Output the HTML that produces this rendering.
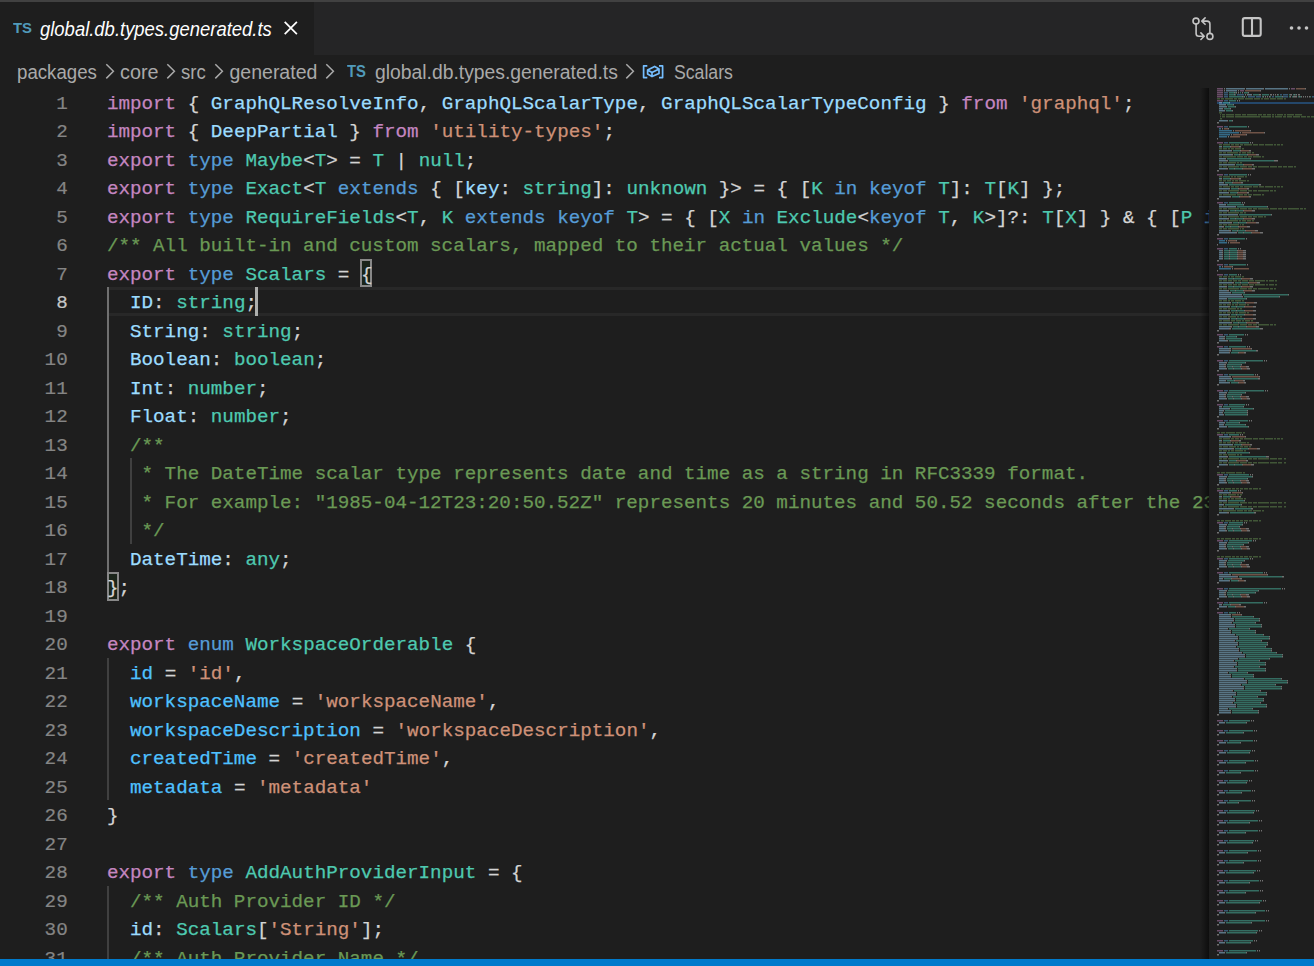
<!DOCTYPE html>
<html><head><meta charset="utf-8">
<style>
html,body{margin:0;padding:0;width:1314px;height:966px;overflow:hidden;background:#1e1e1e;position:relative}
*{box-sizing:border-box}
#top{position:absolute;left:0;top:0;width:1314px;height:2px;background:#414141}
#tabs{position:absolute;left:0;top:2px;width:1314px;height:52.5px;background:#252526}
#tab{position:absolute;left:0;top:0;width:314px;height:52.5px;background:#1e1e1e}
.ui{font-family:"Liberation Sans",sans-serif;position:absolute;white-space:pre}
#crumbs{position:absolute;left:0;top:54.5px;width:1314px;height:33px;background:#1e1e1e}
.cr{font-family:"Liberation Sans",sans-serif;position:absolute;white-space:pre;color:#a9a9a9;font-size:19.5px;line-height:22.4px;top:6.75px;transform-origin:left top}
.chev{position:absolute;top:0}
#ed{position:absolute;left:0;top:0;width:1209px;height:959px;overflow:hidden}
.ln{position:absolute;left:0;height:28.5px;width:1209px}
.ln span{position:absolute;top:2px;-webkit-text-stroke:0.25px currentColor;font-family:"Liberation Mono",monospace;font-size:19.24px;line-height:28.5px;white-space:pre}
.num{position:absolute;left:0;padding-top:2px;width:67.7px;text-align:right;font-family:"Liberation Mono",monospace;font-size:19.24px;line-height:28.5px;height:28.5px;color:#858585;white-space:pre;-webkit-text-stroke:0.2px currentColor}
.num.act{color:#c6c6c6}
.guide{position:absolute;width:1.9px;background:#404040}
.guide.act{background:#707070}
#curline{position:absolute;left:107.5px;top:287.0px;width:1101.5px;height:28.5px;border-top:3px solid #282828;border-bottom:3px solid #282828}
#cursor{position:absolute;left:255.00px;top:287.0px;width:3px;height:28.5px;background:#aeafad}
.bb{position:absolute;border:2px solid #888888;background:rgba(0,100,0,0.1)}
#mm{position:absolute;left:1209px;top:87.5px;width:105px;height:871.5px;background:#1e1e1e}
#mmshadow{position:absolute;left:1200px;top:87.5px;width:9px;height:871.5px;background:linear-gradient(to right,rgba(0,0,0,0),rgba(0,0,0,0.55))}
#status{position:absolute;left:0;top:959px;width:1314px;height:7px;background:#007acc}
</style></head><body>
<div id="top"></div>
<div id="tabs">
  <div id="tab">
    <div class="ui" style="left:12.8px;top:17.2px;font-size:15.2px;line-height:17px;font-weight:bold;color:#519aba;transform:scaleX(0.98);transform-origin:left top">TS</div>
    <div class="ui" style="left:40.2px;top:16.25px;font-size:19.5px;line-height:22.4px;font-style:italic;color:#ffffff;transform:scaleX(0.946);transform-origin:left top">global.db.types.generated.ts</div>
    <svg style="position:absolute;left:282px;top:17px" width="18" height="18" viewBox="0 0 18 18"><path d="M2.7 2.8L14.9 15.1M14.9 2.8L2.7 15.1" stroke="#ffffff" stroke-width="1.7" fill="none"/></svg>
  </div>
  <svg style="position:absolute;left:1188px;top:12px" width="30" height="30" viewBox="0 0 30 30" fill="none" stroke="#c5c5c5" stroke-width="1.6" stroke-linecap="round" stroke-linejoin="round"><circle cx="8" cy="7.1" r="3"/><path d="M8.1 10.3V19.5Q8.1 22.2 10.8 22.2H16.1M12.9 18.9L16.2 22.2L12.9 25.5"/><circle cx="21.9" cy="22.4" r="3"/><path d="M21.9 19.3V10Q21.9 7.1 19 7.1H14M17.1 3.9L13.8 7.1L17.1 10.3"/></svg>
  <svg style="position:absolute;left:1236px;top:10px" width="30" height="30" viewBox="0 0 30 30" fill="none" stroke="#c5c5c5" stroke-width="2.1"><rect x="6.8" y="6.1" width="17.9" height="17.8" rx="2"/><path d="M16 6.1V23.9"/></svg>
  <svg style="position:absolute;left:1284px;top:10px" width="30" height="30" viewBox="0 0 30 30" fill="#c5c5c5"><circle cx="7.5" cy="16" r="1.8"/><circle cx="15" cy="16" r="1.8"/><circle cx="22.5" cy="16" r="1.8"/></svg>
</div>
<div id="crumbs">

  <div class="cr" style="left:16.8px;transform:scaleX(0.957)">packages</div>
  <svg class="chev" style="left:104px" width="12" height="33" viewBox="0 0 12 33"><path d="M2.3 9.2L9.4 16.3L2.3 23.4" stroke="#a9a9a9" stroke-width="1.5" fill="none"/></svg>
  <div class="cr" style="left:119.7px;transform:scaleX(1.016)">core</div>
  <svg class="chev" style="left:164.8px" width="12" height="33" viewBox="0 0 12 33"><path d="M2.3 9.2L9.4 16.3L2.3 23.4" stroke="#a9a9a9" stroke-width="1.5" fill="none"/></svg>
  <div class="cr" style="left:181px;transform:scaleX(0.95)">src</div>
  <svg class="chev" style="left:213.3px" width="12" height="33" viewBox="0 0 12 33"><path d="M2.3 9.2L9.4 16.3L2.3 23.4" stroke="#a9a9a9" stroke-width="1.5" fill="none"/></svg>
  <div class="cr" style="left:229.5px;transform:scaleX(1.0)">generated</div>
  <svg class="chev" style="left:324.2px" width="12" height="33" viewBox="0 0 12 33"><path d="M2.3 9.2L9.4 16.3L2.3 23.4" stroke="#a9a9a9" stroke-width="1.5" fill="none"/></svg>
  <div class="ui" style="left:346.8px;top:7.4px;font-size:16.5px;line-height:18px;font-weight:bold;color:#519aba;transform:scaleX(0.9);transform-origin:left top">TS</div>
  <div class="cr" style="left:375px;transform:scaleX(0.991)">global.db.types.generated.ts</div>
  <svg class="chev" style="left:624.2px" width="12" height="33" viewBox="0 0 12 33"><path d="M2.3 9.2L9.4 16.3L2.3 23.4" stroke="#a9a9a9" stroke-width="1.5" fill="none"/></svg>
  <svg style="position:absolute;left:638px;top:5.5px" width="30" height="24" viewBox="0 0 30 24" fill="none" stroke="#75beff" stroke-width="1.7" stroke-linejoin="round"><path d="M9.3 5.8H5.6V17.6H9.3M21 5.8H24.6V17.6H21"/><path d="M16.7 6.4L21 8.9V13.4L14 16.6L9.6 14.1V10.1Z M9.6 10.1L14 12.6L21 8.9M14 12.6V16.6"/></svg>
  <div class="cr" style="left:674px;transform:scaleX(0.906)">Scalars</div>
</div>
<div id="ed">
<div id="curline"></div>
<div class="guide act" style="left:106.90px;top:287.00px;height:285.00px"></div><div class="guide" style="left:129.99px;top:458.00px;height:85.50px"></div><div class="guide" style="left:106.90px;top:657.50px;height:142.50px"></div><div class="guide" style="left:106.90px;top:885.50px;height:85.50px"></div>
<div class="bb" style="left:359.8px;top:258.5px;width:12.4px;height:28.5px"></div><div class="bb" style="left:106.9px;top:572px;width:12px;height:28.5px"></div>
<div class="ln" style="top:87.50px"><span style="left:106.900px;color:#c586c0">import</span><span style="left:187.722px;color:#d4d4d4">{</span><span style="left:210.814px;color:#9cdcfe">GraphQLResolveInfo</span><span style="left:418.642px;color:#d4d4d4">,</span><span style="left:441.734px;color:#9cdcfe">GraphQLScalarType</span><span style="left:638.016px;color:#d4d4d4">,</span><span style="left:661.108px;color:#9cdcfe">GraphQLScalarTypeConfig</span><span style="left:938.212px;color:#d4d4d4">}</span><span style="left:961.304px;color:#c586c0">from</span><span style="left:1019.034px;color:#ce9178">&#x27;graphql&#x27;</span><span style="left:1122.948px;color:#d4d4d4">;</span></div>
<div class="num" style="top:87.50px">1</div>
<div class="ln" style="top:116.00px"><span style="left:106.900px;color:#c586c0">import</span><span style="left:187.722px;color:#d4d4d4">{</span><span style="left:210.814px;color:#9cdcfe">DeepPartial</span><span style="left:349.366px;color:#d4d4d4">}</span><span style="left:372.458px;color:#c586c0">from</span><span style="left:430.188px;color:#ce9178">&#x27;utility-types&#x27;</span><span style="left:603.378px;color:#d4d4d4">;</span></div>
<div class="num" style="top:116.00px">2</div>
<div class="ln" style="top:144.50px"><span style="left:106.900px;color:#c586c0">export</span><span style="left:187.722px;color:#569cd6">type</span><span style="left:245.452px;color:#4ec9b0">Maybe</span><span style="left:303.182px;color:#d4d4d4">&lt;</span><span style="left:314.728px;color:#4ec9b0">T</span><span style="left:326.274px;color:#d4d4d4">&gt;</span><span style="left:349.366px;color:#d4d4d4">=</span><span style="left:372.458px;color:#4ec9b0">T</span><span style="left:395.550px;color:#d4d4d4">|</span><span style="left:418.642px;color:#4ec9b0">null</span><span style="left:464.826px;color:#d4d4d4">;</span></div>
<div class="num" style="top:144.50px">3</div>
<div class="ln" style="top:173.00px"><span style="left:106.900px;color:#c586c0">export</span><span style="left:187.722px;color:#569cd6">type</span><span style="left:245.452px;color:#4ec9b0">Exact</span><span style="left:303.182px;color:#d4d4d4">&lt;</span><span style="left:314.728px;color:#4ec9b0">T</span><span style="left:337.820px;color:#569cd6">extends</span><span style="left:430.188px;color:#d4d4d4">{</span><span style="left:453.280px;color:#d4d4d4">[</span><span style="left:464.826px;color:#9cdcfe">key</span><span style="left:499.464px;color:#d4d4d4">:</span><span style="left:522.556px;color:#4ec9b0">string</span><span style="left:591.832px;color:#d4d4d4">]:</span><span style="left:626.470px;color:#4ec9b0">unknown</span><span style="left:718.838px;color:#d4d4d4">}&gt;</span><span style="left:753.476px;color:#d4d4d4">=</span><span style="left:776.568px;color:#d4d4d4">{</span><span style="left:799.660px;color:#d4d4d4">[</span><span style="left:811.206px;color:#4ec9b0">K</span><span style="left:834.298px;color:#569cd6">in</span><span style="left:868.936px;color:#569cd6">keyof</span><span style="left:938.212px;color:#4ec9b0">T</span><span style="left:949.758px;color:#d4d4d4">]:</span><span style="left:984.396px;color:#4ec9b0">T</span><span style="left:995.942px;color:#d4d4d4">[</span><span style="left:1007.488px;color:#4ec9b0">K</span><span style="left:1019.034px;color:#d4d4d4">]</span><span style="left:1042.126px;color:#d4d4d4">};</span></div>
<div class="num" style="top:173.00px">4</div>
<div class="ln" style="top:201.50px"><span style="left:106.900px;color:#c586c0">export</span><span style="left:187.722px;color:#569cd6">type</span><span style="left:245.452px;color:#4ec9b0">RequireFields</span><span style="left:395.550px;color:#d4d4d4">&lt;</span><span style="left:407.096px;color:#4ec9b0">T</span><span style="left:418.642px;color:#d4d4d4">,</span><span style="left:441.734px;color:#4ec9b0">K</span><span style="left:464.826px;color:#569cd6">extends</span><span style="left:557.194px;color:#569cd6">keyof</span><span style="left:626.470px;color:#4ec9b0">T</span><span style="left:638.016px;color:#d4d4d4">&gt;</span><span style="left:661.108px;color:#d4d4d4">=</span><span style="left:684.200px;color:#d4d4d4">{</span><span style="left:707.292px;color:#d4d4d4">[</span><span style="left:718.838px;color:#4ec9b0">X</span><span style="left:741.930px;color:#569cd6">in</span><span style="left:776.568px;color:#4ec9b0">Exclude</span><span style="left:857.390px;color:#d4d4d4">&lt;</span><span style="left:868.936px;color:#569cd6">keyof</span><span style="left:938.212px;color:#4ec9b0">T</span><span style="left:949.758px;color:#d4d4d4">,</span><span style="left:972.850px;color:#4ec9b0">K</span><span style="left:984.396px;color:#d4d4d4">&gt;]?:</span><span style="left:1042.126px;color:#4ec9b0">T</span><span style="left:1053.672px;color:#d4d4d4">[</span><span style="left:1065.218px;color:#4ec9b0">X</span><span style="left:1076.764px;color:#d4d4d4">]</span><span style="left:1099.856px;color:#d4d4d4">}</span><span style="left:1122.948px;color:#d4d4d4">&amp;</span><span style="left:1146.040px;color:#d4d4d4">{</span><span style="left:1169.132px;color:#d4d4d4">[</span><span style="left:1180.678px;color:#4ec9b0">P</span><span style="left:1203.770px;color:#569cd6">in</span><span style="left:1238.408px;color:#4ec9b0">K</span><span style="left:1249.954px;color:#d4d4d4">]-?:</span><span style="left:1307.684px;color:#4ec9b0">NonNullable</span><span style="left:1434.690px;color:#d4d4d4">&lt;</span><span style="left:1446.236px;color:#4ec9b0">T</span><span style="left:1457.782px;color:#d4d4d4">[</span><span style="left:1469.328px;color:#4ec9b0">P</span><span style="left:1480.874px;color:#d4d4d4">]&gt;</span><span style="left:1515.512px;color:#d4d4d4">};</span></div>
<div class="num" style="top:201.50px">5</div>
<div class="ln" style="top:230.00px"><span style="left:106.900px;color:#6a9955">/** All built-in and custom scalars, mapped to their actual values */</span></div>
<div class="num" style="top:230.00px">6</div>
<div class="ln" style="top:258.50px"><span style="left:106.900px;color:#c586c0">export</span><span style="left:187.722px;color:#569cd6">type</span><span style="left:245.452px;color:#4ec9b0">Scalars</span><span style="left:337.820px;color:#d4d4d4">=</span><span style="left:360.912px;color:#d4d4d4">{</span></div>
<div class="num" style="top:258.50px">7</div>
<div class="ln" style="top:287.00px"><span style="left:129.992px;color:#9cdcfe">ID</span><span style="left:153.084px;color:#d4d4d4">:</span><span style="left:176.176px;color:#4ec9b0">string</span><span style="left:245.452px;color:#d4d4d4">;</span></div>
<div class="num act" style="top:287.00px">8</div>
<div class="ln" style="top:315.50px"><span style="left:129.992px;color:#9cdcfe">String</span><span style="left:199.268px;color:#d4d4d4">:</span><span style="left:222.360px;color:#4ec9b0">string</span><span style="left:291.636px;color:#d4d4d4">;</span></div>
<div class="num" style="top:315.50px">9</div>
<div class="ln" style="top:344.00px"><span style="left:129.992px;color:#9cdcfe">Boolean</span><span style="left:210.814px;color:#d4d4d4">:</span><span style="left:233.906px;color:#4ec9b0">boolean</span><span style="left:314.728px;color:#d4d4d4">;</span></div>
<div class="num" style="top:344.00px">10</div>
<div class="ln" style="top:372.50px"><span style="left:129.992px;color:#9cdcfe">Int</span><span style="left:164.630px;color:#d4d4d4">:</span><span style="left:187.722px;color:#4ec9b0">number</span><span style="left:256.998px;color:#d4d4d4">;</span></div>
<div class="num" style="top:372.50px">11</div>
<div class="ln" style="top:401.00px"><span style="left:129.992px;color:#9cdcfe">Float</span><span style="left:187.722px;color:#d4d4d4">:</span><span style="left:210.814px;color:#4ec9b0">number</span><span style="left:280.090px;color:#d4d4d4">;</span></div>
<div class="num" style="top:401.00px">12</div>
<div class="ln" style="top:429.50px"><span style="left:129.992px;color:#6a9955">/**</span></div>
<div class="num" style="top:429.50px">13</div>
<div class="ln" style="top:458.00px"><span style="left:106.900px;color:#6a9955">   * The DateTime scalar type represents date and time as a string in RFC3339 format.</span></div>
<div class="num" style="top:458.00px">14</div>
<div class="ln" style="top:486.50px"><span style="left:106.900px;color:#6a9955">   * For example: &quot;1985-04-12T23:20:50.52Z&quot; represents 20 minutes and 50.52 seconds after the 23rd hour of April 12th, 1985 in UTC.</span></div>
<div class="num" style="top:486.50px">15</div>
<div class="ln" style="top:515.00px"><span style="left:106.900px;color:#6a9955">   */</span></div>
<div class="num" style="top:515.00px">16</div>
<div class="ln" style="top:543.50px"><span style="left:129.992px;color:#9cdcfe">DateTime</span><span style="left:222.360px;color:#d4d4d4">:</span><span style="left:245.452px;color:#4ec9b0">any</span><span style="left:280.090px;color:#d4d4d4">;</span></div>
<div class="num" style="top:543.50px">17</div>
<div class="ln" style="top:572.00px"><span style="left:106.900px;color:#d4d4d4">};</span></div>
<div class="num" style="top:572.00px">18</div>
<div class="ln" style="top:600.50px"></div>
<div class="num" style="top:600.50px">19</div>
<div class="ln" style="top:629.00px"><span style="left:106.900px;color:#c586c0">export</span><span style="left:187.722px;color:#569cd6">enum</span><span style="left:245.452px;color:#4ec9b0">WorkspaceOrderable</span><span style="left:464.826px;color:#d4d4d4">{</span></div>
<div class="num" style="top:629.00px">20</div>
<div class="ln" style="top:657.50px"><span style="left:129.992px;color:#4fc1ff">id</span><span style="left:164.630px;color:#d4d4d4">=</span><span style="left:187.722px;color:#ce9178">&#x27;id&#x27;</span><span style="left:233.906px;color:#d4d4d4">,</span></div>
<div class="num" style="top:657.50px">21</div>
<div class="ln" style="top:686.00px"><span style="left:129.992px;color:#4fc1ff">workspaceName</span><span style="left:291.636px;color:#d4d4d4">=</span><span style="left:314.728px;color:#ce9178">&#x27;workspaceName&#x27;</span><span style="left:487.918px;color:#d4d4d4">,</span></div>
<div class="num" style="top:686.00px">22</div>
<div class="ln" style="top:714.50px"><span style="left:129.992px;color:#4fc1ff">workspaceDescription</span><span style="left:372.458px;color:#d4d4d4">=</span><span style="left:395.550px;color:#ce9178">&#x27;workspaceDescription&#x27;</span><span style="left:649.562px;color:#d4d4d4">,</span></div>
<div class="num" style="top:714.50px">23</div>
<div class="ln" style="top:743.00px"><span style="left:129.992px;color:#4fc1ff">createdTime</span><span style="left:268.544px;color:#d4d4d4">=</span><span style="left:291.636px;color:#ce9178">&#x27;createdTime&#x27;</span><span style="left:441.734px;color:#d4d4d4">,</span></div>
<div class="num" style="top:743.00px">24</div>
<div class="ln" style="top:771.50px"><span style="left:129.992px;color:#4fc1ff">metadata</span><span style="left:233.906px;color:#d4d4d4">=</span><span style="left:256.998px;color:#ce9178">&#x27;metadata&#x27;</span></div>
<div class="num" style="top:771.50px">25</div>
<div class="ln" style="top:800.00px"><span style="left:106.900px;color:#d4d4d4">}</span></div>
<div class="num" style="top:800.00px">26</div>
<div class="ln" style="top:828.50px"></div>
<div class="num" style="top:828.50px">27</div>
<div class="ln" style="top:857.00px"><span style="left:106.900px;color:#c586c0">export</span><span style="left:187.722px;color:#569cd6">type</span><span style="left:245.452px;color:#4ec9b0">AddAuthProviderInput</span><span style="left:487.918px;color:#d4d4d4">=</span><span style="left:511.010px;color:#d4d4d4">{</span></div>
<div class="num" style="top:857.00px">28</div>
<div class="ln" style="top:885.50px"><span style="left:129.992px;color:#6a9955">/** Auth Provider ID */</span></div>
<div class="num" style="top:885.50px">29</div>
<div class="ln" style="top:914.00px"><span style="left:129.992px;color:#9cdcfe">id</span><span style="left:153.084px;color:#d4d4d4">:</span><span style="left:176.176px;color:#4ec9b0">Scalars</span><span style="left:256.998px;color:#d4d4d4">[</span><span style="left:268.544px;color:#ce9178">&#x27;String&#x27;</span><span style="left:360.912px;color:#d4d4d4">];</span></div>
<div class="num" style="top:914.00px">30</div>
<div class="ln" style="top:942.50px"><span style="left:129.992px;color:#6a9955">/** Auth Provider Name */</span></div>
<div class="num" style="top:942.50px">31</div>
<div id="cursor"></div>
</div>
<div id="mmshadow"></div>
<div id="mm"><div style="position:absolute;left:8px;top:14px;width:97px;height:2px;background:#264f78;opacity:0.85"></div><svg width="105" height="871" style="position:absolute;left:0;top:0.5px" opacity="0.46"><path fill="#c586c0" d="M8 0h6v1.6h-6zM82 0h4v1.6h-4zM8 2h6v1.6h-6zM31 2h4v1.6h-4zM8 4h6v1.6h-6zM8 6h6v1.6h-6zM8 8h6v1.6h-6zM8 12h6v1.6h-6zM8 38h6v1.6h-6zM8 54h6v1.6h-6zM8 86h6v1.6h-6zM8 114h6v1.6h-6zM8 150h6v1.6h-6zM8 160h6v1.6h-6zM8 176h6v1.6h-6zM8 186h6v1.6h-6zM8 246h6v1.6h-6zM8 258h6v1.6h-6zM8 272h6v1.6h-6zM8 286h6v1.6h-6zM8 302h6v1.6h-6zM8 316h6v1.6h-6zM8 332h6v1.6h-6zM8 346h6v1.6h-6zM8 386h6v1.6h-6zM8 402h6v1.6h-6zM8 434h6v1.6h-6zM8 452h6v1.6h-6zM8 470h6v1.6h-6zM8 484h6v1.6h-6zM8 500h6v1.6h-6zM8 514h6v1.6h-6zM8 524h6v1.6h-6zM8 632h6v1.6h-6zM8 642h6v1.6h-6zM8 652h6v1.6h-6zM8 662h6v1.6h-6zM8 672h6v1.6h-6zM8 682h6v1.6h-6zM8 692h6v1.6h-6zM8 702h6v1.6h-6zM8 712h6v1.6h-6zM8 722h6v1.6h-6zM8 732h6v1.6h-6zM8 742h6v1.6h-6zM8 752h6v1.6h-6zM8 762h6v1.6h-6zM8 772h6v1.6h-6zM8 782h6v1.6h-6zM8 792h6v1.6h-6zM8 802h6v1.6h-6zM8 812h6v1.6h-6zM8 822h6v1.6h-6zM8 832h6v1.6h-6zM8 842h6v1.6h-6zM8 852h6v1.6h-6zM8 862h6v1.6h-6z"/><path fill="#d4d4d4" d="M15 0h1v1.6h-1zM35 0h1v1.6h-1zM54 0h1v1.6h-1zM80 0h1v1.6h-1zM96 0h1v1.6h-1zM15 2h1v1.6h-1zM29 2h1v1.6h-1zM51 2h1v1.6h-1zM25 4h1v1.6h-1zM27 4h1v1.6h-1zM29 4h1v1.6h-1zM33 4h1v1.6h-1zM39 4h1v1.6h-1zM25 6h1v1.6h-1zM36 6h1v1.6h-1zM38 6h1v1.6h-1zM42 6h1v1.6h-1zM50 6h2v1.6h-2zM61 6h2v1.6h-2zM64 6h1v1.6h-1zM66 6h1v1.6h-1zM68 6h1v1.6h-1zM81 6h2v1.6h-2zM85 6h1v1.6h-1zM87 6h1v1.6h-1zM89 6h2v1.6h-2zM33 8h1v1.6h-1zM35 8h1v1.6h-1zM54 8h1v1.6h-1zM56 8h1v1.6h-1zM58 8h1v1.6h-1zM60 8h1v1.6h-1zM73 8h1v1.6h-1zM81 8h1v1.6h-1zM84 8h4v1.6h-4zM90 8h1v1.6h-1zM92 8h1v1.6h-1zM94 8h1v1.6h-1zM96 8h1v1.6h-1zM98 8h1v1.6h-1zM100 8h1v1.6h-1zM107 8h4v1.6h-4zM123 8h1v1.6h-1zM125 8h1v1.6h-1zM127 8h2v1.6h-2zM130 8h2v1.6h-2zM28 12h1v1.6h-1zM30 12h1v1.6h-1zM12 14h1v1.6h-1zM20 14h1v1.6h-1zM16 16h1v1.6h-1zM24 16h1v1.6h-1zM17 18h1v1.6h-1zM26 18h1v1.6h-1zM13 20h1v1.6h-1zM21 20h1v1.6h-1zM15 22h1v1.6h-1zM23 22h1v1.6h-1zM18 32h1v1.6h-1zM23 32h1v1.6h-1zM8 34h2v1.6h-2zM39 38h1v1.6h-1zM13 40h1v1.6h-1zM19 40h1v1.6h-1zM24 42h1v1.6h-1zM41 42h1v1.6h-1zM31 44h1v1.6h-1zM55 44h1v1.6h-1zM22 46h1v1.6h-1zM37 46h1v1.6h-1zM19 48h1v1.6h-1zM8 50h1v1.6h-1zM41 54h1v1.6h-1zM43 54h1v1.6h-1zM12 58h1v1.6h-1zM21 58h1v1.6h-1zM30 58h2v1.6h-2zM22 62h1v1.6h-1zM31 62h1v1.6h-1zM40 62h2v1.6h-2zM22 66h2v1.6h-2zM30 66h1v1.6h-1zM38 66h1v1.6h-1zM47 66h3v1.6h-3zM16 70h1v1.6h-1zM41 70h1v1.6h-1zM17 72h2v1.6h-2zM65 72h4v1.6h-4zM25 76h1v1.6h-1zM34 76h1v1.6h-1zM43 76h2v1.6h-2zM17 80h2v1.6h-2zM25 80h1v1.6h-1zM33 80h1v1.6h-1zM43 80h3v1.6h-3zM8 82h2v1.6h-2zM39 86h1v1.6h-1zM41 86h1v1.6h-1zM12 90h1v1.6h-1zM21 90h1v1.6h-1zM30 90h2v1.6h-2zM14 94h1v1.6h-1zM23 94h1v1.6h-1zM32 94h2v1.6h-2zM17 96h2v1.6h-2zM50 96h2v1.6h-2zM20 100h1v1.6h-1zM29 100h1v1.6h-1zM38 100h2v1.6h-2zM19 104h1v1.6h-1zM28 104h1v1.6h-1zM38 104h2v1.6h-2zM21 108h1v1.6h-1zM30 108h1v1.6h-1zM40 108h2v1.6h-2zM8 110h2v1.6h-2zM33 114h1v1.6h-1zM35 114h1v1.6h-1zM16 116h1v1.6h-1zM34 116h1v1.6h-1zM26 118h1v1.6h-1zM58 118h1v1.6h-1zM18 122h2v1.6h-2zM26 122h1v1.6h-1zM34 122h1v1.6h-1zM43 122h3v1.6h-3zM28 126h1v1.6h-1zM62 126h1v1.6h-1zM18 130h2v1.6h-2zM26 130h1v1.6h-1zM34 130h1v1.6h-1zM43 130h3v1.6h-3zM21 134h2v1.6h-2zM29 134h1v1.6h-1zM37 134h1v1.6h-1zM47 134h3v1.6h-3zM13 138h2v1.6h-2zM21 138h1v1.6h-1zM29 138h1v1.6h-1zM38 138h3v1.6h-3zM20 142h2v1.6h-2zM28 142h1v1.6h-1zM36 142h1v1.6h-1zM46 142h3v1.6h-3zM26 144h2v1.6h-2zM34 144h1v1.6h-1zM42 144h1v1.6h-1zM51 144h3v1.6h-3zM8 146h2v1.6h-2zM37 150h1v1.6h-1zM17 152h1v1.6h-1zM27 152h1v1.6h-1zM19 154h1v1.6h-1zM8 156h1v1.6h-1zM29 160h1v1.6h-1zM31 160h1v1.6h-1zM13 162h1v1.6h-1zM20 162h1v1.6h-1zM28 162h1v1.6h-1zM34 162h3v1.6h-3zM13 164h1v1.6h-1zM20 164h1v1.6h-1zM28 164h1v1.6h-1zM34 164h3v1.6h-3zM13 166h1v1.6h-1zM20 166h1v1.6h-1zM28 166h1v1.6h-1zM34 166h3v1.6h-3zM13 168h1v1.6h-1zM20 168h1v1.6h-1zM28 168h1v1.6h-1zM34 168h3v1.6h-3zM13 170h1v1.6h-1zM20 170h1v1.6h-1zM28 170h1v1.6h-1zM34 170h3v1.6h-3zM8 172h2v1.6h-2zM38 176h1v1.6h-1zM13 178h1v1.6h-1zM23 178h1v1.6h-1zM23 180h1v1.6h-1zM8 182h1v1.6h-1zM29 186h1v1.6h-1zM31 186h1v1.6h-1zM16 190h2v1.6h-2zM24 190h1v1.6h-1zM32 190h1v1.6h-1zM41 190h3v1.6h-3zM23 194h2v1.6h-2zM31 194h1v1.6h-1zM39 194h1v1.6h-1zM48 194h3v1.6h-3zM16 198h2v1.6h-2zM24 198h1v1.6h-1zM32 198h1v1.6h-1zM41 198h3v1.6h-3zM18 202h2v1.6h-2zM26 202h1v1.6h-1zM34 202h1v1.6h-1zM43 202h3v1.6h-3zM21 204h1v1.6h-1zM35 204h1v1.6h-1zM32 206h1v1.6h-1zM79 206h1v1.6h-1zM33 208h1v1.6h-1zM70 208h1v1.6h-1zM17 210h1v1.6h-1zM37 210h1v1.6h-1zM20 214h2v1.6h-2zM28 214h1v1.6h-1zM36 214h1v1.6h-1zM45 214h3v1.6h-3zM19 218h2v1.6h-2zM27 218h1v1.6h-1zM35 218h1v1.6h-1zM44 218h3v1.6h-3zM19 222h2v1.6h-2zM27 222h1v1.6h-1zM35 222h1v1.6h-1zM44 222h3v1.6h-3zM19 226h2v1.6h-2zM27 226h1v1.6h-1zM35 226h1v1.6h-1zM44 226h3v1.6h-3zM19 230h2v1.6h-2zM27 230h1v1.6h-1zM35 230h1v1.6h-1zM44 230h3v1.6h-3zM21 234h2v1.6h-2zM29 234h1v1.6h-1zM37 234h1v1.6h-1zM47 234h3v1.6h-3zM21 238h2v1.6h-2zM29 238h1v1.6h-1zM37 238h1v1.6h-1zM47 238h3v1.6h-3zM20 240h2v1.6h-2zM51 240h3v1.6h-3zM8 242h2v1.6h-2zM36 246h1v1.6h-1zM38 246h1v1.6h-1zM15 248h1v1.6h-1zM27 248h1v1.6h-1zM14 250h2v1.6h-2zM32 250h1v1.6h-1zM17 252h2v1.6h-2zM32 252h1v1.6h-1zM8 254h2v1.6h-2zM38 258h1v1.6h-1zM40 258h1v1.6h-1zM20 260h2v1.6h-2zM42 260h1v1.6h-1zM20 262h2v1.6h-2zM47 262h2v1.6h-2zM20 264h1v1.6h-1zM29 264h1v1.6h-1zM35 264h2v1.6h-2zM8 266h2v1.6h-2zM55 272h1v1.6h-1zM57 272h1v1.6h-1zM16 274h2v1.6h-2zM36 274h1v1.6h-1zM15 276h2v1.6h-2zM32 276h1v1.6h-1zM15 278h2v1.6h-2zM23 278h1v1.6h-1zM31 278h1v1.6h-1zM37 278h3v1.6h-3zM16 280h2v1.6h-2zM24 280h1v1.6h-1zM32 280h1v1.6h-1zM38 280h3v1.6h-3zM8 282h2v1.6h-2zM46 286h1v1.6h-1zM48 286h1v1.6h-1zM20 288h2v1.6h-2zM50 288h1v1.6h-1zM21 290h2v1.6h-2zM49 290h2v1.6h-2zM16 292h1v1.6h-1zM25 292h1v1.6h-1zM34 292h2v1.6h-2zM20 294h1v1.6h-1zM29 294h1v1.6h-1zM35 294h2v1.6h-2zM8 296h2v1.6h-2zM56 302h1v1.6h-1zM58 302h1v1.6h-1zM16 304h2v1.6h-2zM36 304h1v1.6h-1zM15 306h2v1.6h-2zM32 306h1v1.6h-1zM15 308h2v1.6h-2zM23 308h1v1.6h-1zM31 308h1v1.6h-1zM37 308h3v1.6h-3zM16 310h2v1.6h-2zM24 310h1v1.6h-1zM32 310h1v1.6h-1zM38 310h3v1.6h-3zM8 312h2v1.6h-2zM37 316h1v1.6h-1zM39 316h1v1.6h-1zM12 318h1v1.6h-1zM34 318h1v1.6h-1zM20 320h1v1.6h-1zM44 320h1v1.6h-1zM14 322h1v1.6h-1zM38 322h1v1.6h-1zM13 324h1v1.6h-1zM38 324h1v1.6h-1zM14 326h1v1.6h-1zM38 326h1v1.6h-1zM8 328h2v1.6h-2zM40 332h1v1.6h-1zM42 332h1v1.6h-1zM15 334h1v1.6h-1zM30 334h1v1.6h-1zM14 336h1v1.6h-1zM36 336h1v1.6h-1zM17 338h1v1.6h-1zM39 338h1v1.6h-1zM8 340h2v1.6h-2zM31 346h1v1.6h-1zM33 346h1v1.6h-1zM20 348h2v1.6h-2zM36 348h1v1.6h-1zM12 352h1v1.6h-1zM21 352h1v1.6h-1zM30 352h2v1.6h-2zM23 356h1v1.6h-1zM32 356h1v1.6h-1zM41 356h2v1.6h-2zM23 360h2v1.6h-2zM31 360h1v1.6h-1zM39 360h1v1.6h-1zM48 360h3v1.6h-3zM16 364h1v1.6h-1zM40 364h1v1.6h-1zM17 368h2v1.6h-2zM57 368h3v1.6h-3zM18 372h1v1.6h-1zM27 372h1v1.6h-1zM37 372h2v1.6h-2zM17 376h2v1.6h-2zM25 376h1v1.6h-1zM33 376h1v1.6h-1zM42 376h3v1.6h-3zM8 378h2v1.6h-2zM41 386h1v1.6h-1zM43 386h1v1.6h-1zM16 388h2v1.6h-2zM43 388h1v1.6h-1zM15 390h2v1.6h-2zM38 390h1v1.6h-1zM15 392h2v1.6h-2zM23 392h1v1.6h-1zM31 392h1v1.6h-1zM37 392h3v1.6h-3zM16 394h2v1.6h-2zM24 394h1v1.6h-1zM32 394h1v1.6h-1zM38 394h3v1.6h-3zM8 396h2v1.6h-2zM29 402h1v1.6h-1zM31 402h1v1.6h-1zM20 404h2v1.6h-2zM33 404h1v1.6h-1zM12 408h1v1.6h-1zM21 408h1v1.6h-1zM30 408h2v1.6h-2zM17 412h1v1.6h-1zM35 412h1v1.6h-1zM14 416h1v1.6h-1zM32 416h1v1.6h-1zM24 420h1v1.6h-1zM42 420h2v1.6h-2zM18 424h2v1.6h-2zM45 424h2v1.6h-2zM8 426h2v1.6h-2zM35 434h1v1.6h-1zM37 434h1v1.6h-1zM16 436h2v1.6h-2zM33 436h1v1.6h-1zM15 438h2v1.6h-2zM30 438h1v1.6h-1zM15 440h2v1.6h-2zM23 440h1v1.6h-1zM31 440h1v1.6h-1zM37 440h3v1.6h-3zM16 442h2v1.6h-2zM24 442h1v1.6h-1zM32 442h1v1.6h-1zM38 442h3v1.6h-3zM8 444h2v1.6h-2zM44 452h1v1.6h-1zM46 452h1v1.6h-1zM16 454h2v1.6h-2zM39 454h1v1.6h-1zM15 456h2v1.6h-2zM34 456h1v1.6h-1zM15 458h2v1.6h-2zM23 458h1v1.6h-1zM31 458h1v1.6h-1zM37 458h3v1.6h-3zM16 460h2v1.6h-2zM24 460h1v1.6h-1zM32 460h1v1.6h-1zM38 460h3v1.6h-3zM8 462h2v1.6h-2zM41 470h1v1.6h-1zM43 470h1v1.6h-1zM16 472h2v1.6h-2zM35 472h1v1.6h-1zM15 474h2v1.6h-2zM32 474h1v1.6h-1zM15 476h2v1.6h-2zM23 476h1v1.6h-1zM31 476h1v1.6h-1zM37 476h3v1.6h-3zM16 478h2v1.6h-2zM24 478h1v1.6h-1zM32 478h1v1.6h-1zM38 478h3v1.6h-3zM8 480h2v1.6h-2zM55 484h1v1.6h-1zM57 484h1v1.6h-1zM20 486h2v1.6h-2zM58 486h1v1.6h-1zM27 488h2v1.6h-2zM73 488h2v1.6h-2zM13 490h1v1.6h-1zM22 490h1v1.6h-1zM31 490h2v1.6h-2zM20 492h1v1.6h-1zM29 492h1v1.6h-1zM35 492h2v1.6h-2zM8 494h2v1.6h-2zM73 500h1v1.6h-1zM75 500h1v1.6h-1zM16 502h2v1.6h-2zM49 502h1v1.6h-1zM15 504h2v1.6h-2zM46 504h1v1.6h-1zM15 506h2v1.6h-2zM23 506h1v1.6h-1zM31 506h1v1.6h-1zM37 506h3v1.6h-3zM16 508h2v1.6h-2zM24 508h1v1.6h-1zM32 508h1v1.6h-1zM38 508h3v1.6h-3zM8 510h2v1.6h-2zM55 514h1v1.6h-1zM57 514h1v1.6h-1zM12 516h1v1.6h-1zM21 516h1v1.6h-1zM30 516h2v1.6h-2zM17 518h1v1.6h-1zM26 518h1v1.6h-1zM35 518h2v1.6h-2zM8 520h2v1.6h-2zM28 524h1v1.6h-1zM30 524h1v1.6h-1zM20 526h2v1.6h-2zM32 526h1v1.6h-1zM21 528h1v1.6h-1zM44 528h1v1.6h-1zM24 530h1v1.6h-1zM50 530h1v1.6h-1zM24 532h1v1.6h-1zM50 532h1v1.6h-1zM22 534h1v1.6h-1zM46 534h1v1.6h-1zM25 536h1v1.6h-1zM52 536h1v1.6h-1zM25 538h1v1.6h-1zM52 538h1v1.6h-1zM18 540h1v1.6h-1zM40 540h1v1.6h-1zM21 542h1v1.6h-1zM46 542h1v1.6h-1zM21 544h1v1.6h-1zM46 544h1v1.6h-1zM25 546h1v1.6h-1zM54 546h1v1.6h-1zM28 548h1v1.6h-1zM60 548h1v1.6h-1zM28 550h1v1.6h-1zM60 550h1v1.6h-1zM25 552h1v1.6h-1zM52 552h1v1.6h-1zM28 554h1v1.6h-1zM58 554h1v1.6h-1zM28 556h1v1.6h-1zM58 556h1v1.6h-1zM26 558h1v1.6h-1zM56 558h1v1.6h-1zM29 560h1v1.6h-1zM62 560h1v1.6h-1zM29 562h1v1.6h-1zM62 562h1v1.6h-1zM32 564h1v1.6h-1zM67 564h1v1.6h-1zM35 566h1v1.6h-1zM73 566h1v1.6h-1zM35 568h1v1.6h-1zM73 568h1v1.6h-1zM28 570h1v1.6h-1zM60 570h1v1.6h-1zM24 572h1v1.6h-1zM50 572h1v1.6h-1zM27 574h1v1.6h-1zM56 574h1v1.6h-1zM27 576h1v1.6h-1zM56 576h1v1.6h-1zM24 578h1v1.6h-1zM50 578h1v1.6h-1zM27 580h1v1.6h-1zM56 580h1v1.6h-1zM27 582h1v1.6h-1zM56 582h1v1.6h-1zM18 584h1v1.6h-1zM38 584h1v1.6h-1zM21 586h1v1.6h-1zM44 586h1v1.6h-1zM21 588h1v1.6h-1zM44 588h1v1.6h-1zM34 590h1v1.6h-1zM72 590h1v1.6h-1zM37 592h1v1.6h-1zM78 592h1v1.6h-1zM37 594h1v1.6h-1zM78 594h1v1.6h-1zM31 596h1v1.6h-1zM66 596h1v1.6h-1zM34 598h1v1.6h-1zM72 598h1v1.6h-1zM34 600h1v1.6h-1zM72 600h1v1.6h-1zM23 602h1v1.6h-1zM51 602h1v1.6h-1zM26 604h1v1.6h-1zM57 604h1v1.6h-1zM26 606h1v1.6h-1zM57 606h1v1.6h-1zM22 608h1v1.6h-1zM48 608h1v1.6h-1zM25 610h1v1.6h-1zM54 610h1v1.6h-1zM25 612h1v1.6h-1zM54 612h1v1.6h-1zM23 614h1v1.6h-1zM51 614h1v1.6h-1zM26 616h1v1.6h-1zM57 616h1v1.6h-1zM26 618h1v1.6h-1zM57 618h1v1.6h-1zM18 620h1v1.6h-1zM43 620h1v1.6h-1zM21 622h1v1.6h-1zM49 622h1v1.6h-1zM21 624h1v1.6h-1zM49 624h1v1.6h-1zM8 626h2v1.6h-2zM42 632h1v1.6h-1zM44 632h1v1.6h-1zM15 634h1v1.6h-1zM37 634h1v1.6h-1zM8 636h2v1.6h-2zM45 642h1v1.6h-1zM47 642h1v1.6h-1zM15 644h1v1.6h-1zM34 644h1v1.6h-1zM8 646h2v1.6h-2zM45 652h1v1.6h-1zM47 652h1v1.6h-1zM16 654h1v1.6h-1zM31 654h1v1.6h-1zM8 656h2v1.6h-2zM43 662h1v1.6h-1zM45 662h1v1.6h-1zM16 664h1v1.6h-1zM40 664h1v1.6h-1zM8 666h2v1.6h-2zM46 672h1v1.6h-1zM48 672h1v1.6h-1zM16 674h1v1.6h-1zM36 674h1v1.6h-1zM8 676h2v1.6h-2zM46 682h1v1.6h-1zM48 682h1v1.6h-1zM15 684h1v1.6h-1zM31 684h1v1.6h-1zM8 686h2v1.6h-2zM40 692h1v1.6h-1zM42 692h1v1.6h-1zM16 694h1v1.6h-1zM37 694h1v1.6h-1zM8 696h2v1.6h-2zM43 702h1v1.6h-1zM45 702h1v1.6h-1zM15 704h1v1.6h-1zM32 704h1v1.6h-1zM8 706h2v1.6h-2zM43 712h1v1.6h-1zM45 712h1v1.6h-1zM16 714h1v1.6h-1zM29 714h1v1.6h-1zM8 716h2v1.6h-2zM47 722h1v1.6h-1zM49 722h1v1.6h-1zM16 724h1v1.6h-1zM44 724h1v1.6h-1zM8 726h2v1.6h-2zM50 732h1v1.6h-1zM52 732h1v1.6h-1zM16 734h1v1.6h-1zM40 734h1v1.6h-1zM8 736h2v1.6h-2zM50 742h1v1.6h-1zM52 742h1v1.6h-1zM16 744h1v1.6h-1zM36 744h1v1.6h-1zM8 746h2v1.6h-2zM46 752h1v1.6h-1zM48 752h1v1.6h-1zM16 754h1v1.6h-1zM43 754h1v1.6h-1zM8 756h2v1.6h-2zM49 762h1v1.6h-1zM51 762h1v1.6h-1zM15 764h1v1.6h-1zM38 764h1v1.6h-1zM8 766h2v1.6h-2zM49 772h1v1.6h-1zM51 772h1v1.6h-1zM15 774h1v1.6h-1zM34 774h1v1.6h-1zM8 776h2v1.6h-2zM48 782h1v1.6h-1zM50 782h1v1.6h-1zM15 784h1v1.6h-1zM44 784h1v1.6h-1zM8 786h2v1.6h-2zM51 792h1v1.6h-1zM53 792h1v1.6h-1zM15 794h1v1.6h-1zM40 794h1v1.6h-1zM8 796h2v1.6h-2zM51 802h1v1.6h-1zM53 802h1v1.6h-1zM15 804h1v1.6h-1zM36 804h1v1.6h-1zM8 806h2v1.6h-2zM54 812h1v1.6h-1zM56 812h1v1.6h-1zM15 814h1v1.6h-1zM50 814h1v1.6h-1zM8 816h2v1.6h-2zM57 822h1v1.6h-1zM59 822h1v1.6h-1zM15 824h1v1.6h-1zM46 824h1v1.6h-1zM8 826h2v1.6h-2zM57 832h1v1.6h-1zM59 832h1v1.6h-1zM15 834h1v1.6h-1zM42 834h1v1.6h-1zM8 836h2v1.6h-2zM50 842h1v1.6h-1zM52 842h1v1.6h-1zM16 844h1v1.6h-1zM47 844h1v1.6h-1zM8 846h2v1.6h-2zM45 852h1v1.6h-1zM47 852h1v1.6h-1zM15 854h1v1.6h-1zM41 854h1v1.6h-1zM8 856h2v1.6h-2zM48 862h1v1.6h-1zM50 862h1v1.6h-1zM15 864h1v1.6h-1zM37 864h1v1.6h-1zM8 866h2v1.6h-2z"/><path fill="#9cdcfe" d="M17 0h18v1.6h-18zM37 0h17v1.6h-17zM56 0h23v1.6h-23zM17 2h11v1.6h-11zM39 6h3v1.6h-3zM10 14h2v1.6h-2zM10 16h6v1.6h-6zM10 18h7v1.6h-7zM10 20h3v1.6h-3zM10 22h5v1.6h-5zM10 32h8v1.6h-8zM10 58h2v1.6h-2zM10 62h12v1.6h-12zM10 66h12v1.6h-12zM10 70h6v1.6h-6zM10 72h7v1.6h-7zM10 76h15v1.6h-15zM10 80h7v1.6h-7zM10 90h2v1.6h-2zM10 94h4v1.6h-4zM10 96h7v1.6h-7zM10 100h10v1.6h-10zM10 104h9v1.6h-9zM10 108h11v1.6h-11zM10 116h6v1.6h-6zM10 118h16v1.6h-16zM10 122h8v1.6h-8zM10 126h18v1.6h-18zM10 130h8v1.6h-8zM10 134h11v1.6h-11zM10 138h3v1.6h-3zM10 142h10v1.6h-10zM10 144h16v1.6h-16zM10 162h3v1.6h-3zM10 164h3v1.6h-3zM10 166h3v1.6h-3zM10 168h3v1.6h-3zM10 170h3v1.6h-3zM10 190h6v1.6h-6zM10 194h13v1.6h-13zM10 198h6v1.6h-6zM10 202h8v1.6h-8zM10 204h11v1.6h-11zM10 206h22v1.6h-22zM10 208h23v1.6h-23zM10 210h7v1.6h-7zM10 214h10v1.6h-10zM10 218h9v1.6h-9zM10 222h9v1.6h-9zM10 226h9v1.6h-9zM10 230h9v1.6h-9zM10 234h11v1.6h-11zM10 238h11v1.6h-11zM10 240h10v1.6h-10zM10 248h5v1.6h-5zM10 250h4v1.6h-4zM10 252h7v1.6h-7zM10 260h10v1.6h-10zM10 262h10v1.6h-10zM10 264h10v1.6h-10zM10 274h6v1.6h-6zM10 276h5v1.6h-5zM10 278h5v1.6h-5zM10 280h6v1.6h-6zM10 288h10v1.6h-10zM10 290h11v1.6h-11zM10 292h6v1.6h-6zM10 294h10v1.6h-10zM10 304h6v1.6h-6zM10 306h5v1.6h-5zM10 308h5v1.6h-5zM10 310h6v1.6h-6zM10 318h2v1.6h-2zM10 320h10v1.6h-10zM10 322h4v1.6h-4zM10 324h3v1.6h-3zM10 326h4v1.6h-4zM10 334h5v1.6h-5zM10 336h4v1.6h-4zM10 338h7v1.6h-7zM10 348h10v1.6h-10zM10 352h2v1.6h-2zM10 356h13v1.6h-13zM10 360h13v1.6h-13zM10 364h6v1.6h-6zM10 368h7v1.6h-7zM10 372h8v1.6h-8zM10 376h7v1.6h-7zM10 388h6v1.6h-6zM10 390h5v1.6h-5zM10 392h5v1.6h-5zM10 394h6v1.6h-6zM10 404h10v1.6h-10zM10 408h2v1.6h-2zM10 412h7v1.6h-7zM10 416h4v1.6h-4zM10 420h14v1.6h-14zM10 424h8v1.6h-8zM10 436h6v1.6h-6zM10 438h5v1.6h-5zM10 440h5v1.6h-5zM10 442h6v1.6h-6zM10 454h6v1.6h-6zM10 456h5v1.6h-5zM10 458h5v1.6h-5zM10 460h6v1.6h-6zM10 472h6v1.6h-6zM10 474h5v1.6h-5zM10 476h5v1.6h-5zM10 478h6v1.6h-6zM10 486h10v1.6h-10zM10 488h17v1.6h-17zM10 490h3v1.6h-3zM10 492h10v1.6h-10zM10 502h6v1.6h-6zM10 504h5v1.6h-5zM10 506h5v1.6h-5zM10 508h6v1.6h-6zM10 516h2v1.6h-2zM10 518h7v1.6h-7zM10 526h10v1.6h-10zM10 528h11v1.6h-11zM10 530h14v1.6h-14zM10 532h14v1.6h-14zM10 534h12v1.6h-12zM10 536h15v1.6h-15zM10 538h15v1.6h-15zM10 540h8v1.6h-8zM10 542h11v1.6h-11zM10 544h11v1.6h-11zM10 546h15v1.6h-15zM10 548h18v1.6h-18zM10 550h18v1.6h-18zM10 552h15v1.6h-15zM10 554h18v1.6h-18zM10 556h18v1.6h-18zM10 558h16v1.6h-16zM10 560h19v1.6h-19zM10 562h19v1.6h-19zM10 564h22v1.6h-22zM10 566h25v1.6h-25zM10 568h25v1.6h-25zM10 570h18v1.6h-18zM10 572h14v1.6h-14zM10 574h17v1.6h-17zM10 576h17v1.6h-17zM10 578h14v1.6h-14zM10 580h17v1.6h-17zM10 582h17v1.6h-17zM10 584h8v1.6h-8zM10 586h11v1.6h-11zM10 588h11v1.6h-11zM10 590h24v1.6h-24zM10 592h27v1.6h-27zM10 594h27v1.6h-27zM10 596h21v1.6h-21zM10 598h24v1.6h-24zM10 600h24v1.6h-24zM10 602h13v1.6h-13zM10 604h16v1.6h-16zM10 606h16v1.6h-16zM10 608h12v1.6h-12zM10 610h15v1.6h-15zM10 612h15v1.6h-15zM10 614h13v1.6h-13zM10 616h16v1.6h-16zM10 618h16v1.6h-16zM10 620h8v1.6h-8zM10 622h11v1.6h-11zM10 624h11v1.6h-11zM10 634h5v1.6h-5zM10 644h5v1.6h-5zM10 654h6v1.6h-6zM10 664h6v1.6h-6zM10 674h6v1.6h-6zM10 684h5v1.6h-5zM10 694h6v1.6h-6zM10 704h5v1.6h-5zM10 714h6v1.6h-6zM10 724h6v1.6h-6zM10 734h6v1.6h-6zM10 744h6v1.6h-6zM10 754h6v1.6h-6zM10 764h5v1.6h-5zM10 774h5v1.6h-5zM10 784h5v1.6h-5zM10 794h5v1.6h-5zM10 804h5v1.6h-5zM10 814h5v1.6h-5zM10 824h5v1.6h-5zM10 834h5v1.6h-5zM10 844h6v1.6h-6zM10 854h5v1.6h-5zM10 864h5v1.6h-5z"/><path fill="#ce9178" d="M87 0h9v1.6h-9zM36 2h15v1.6h-15zM15 40h4v1.6h-4zM26 42h15v1.6h-15zM33 44h22v1.6h-22zM24 46h13v1.6h-13zM21 48h10v1.6h-10zM22 58h8v1.6h-8zM32 62h8v1.6h-8zM39 66h8v1.6h-8zM35 76h8v1.6h-8zM34 80h9v1.6h-9zM22 90h8v1.6h-8zM24 94h8v1.6h-8zM30 100h8v1.6h-8zM29 104h9v1.6h-9zM31 108h9v1.6h-9zM35 122h8v1.6h-8zM35 130h8v1.6h-8zM38 134h9v1.6h-9zM30 138h8v1.6h-8zM37 142h9v1.6h-9zM43 144h8v1.6h-8zM19 152h8v1.6h-8zM21 154h10v1.6h-10zM29 162h5v1.6h-5zM29 164h5v1.6h-5zM29 166h5v1.6h-5zM29 168h5v1.6h-5zM29 170h5v1.6h-5zM15 178h8v1.6h-8zM25 180h15v1.6h-15zM33 190h8v1.6h-8zM40 194h8v1.6h-8zM33 198h8v1.6h-8zM35 202h8v1.6h-8zM37 214h8v1.6h-8zM36 218h8v1.6h-8zM36 222h8v1.6h-8zM36 226h8v1.6h-8zM36 230h8v1.6h-8zM38 234h9v1.6h-9zM38 238h9v1.6h-9zM23 260h19v1.6h-19zM30 264h5v1.6h-5zM32 278h5v1.6h-5zM33 280h5v1.6h-5zM23 288h27v1.6h-27zM26 292h8v1.6h-8zM30 294h5v1.6h-5zM32 308h5v1.6h-5zM33 310h5v1.6h-5zM23 348h13v1.6h-13zM22 352h8v1.6h-8zM33 356h8v1.6h-8zM40 360h8v1.6h-8zM28 372h9v1.6h-9zM34 376h8v1.6h-8zM32 392h5v1.6h-5zM33 394h5v1.6h-5zM23 404h10v1.6h-10zM22 408h8v1.6h-8zM32 440h5v1.6h-5zM33 442h5v1.6h-5zM32 458h5v1.6h-5zM33 460h5v1.6h-5zM32 476h5v1.6h-5zM33 478h5v1.6h-5zM23 486h35v1.6h-35zM23 490h8v1.6h-8zM30 492h5v1.6h-5zM32 506h5v1.6h-5zM33 508h5v1.6h-5zM22 516h8v1.6h-8zM27 518h8v1.6h-8zM23 526h9v1.6h-9z"/><path fill="#569cd6" d="M15 4h4v1.6h-4zM15 6h4v1.6h-4zM28 6h7v1.6h-7zM71 6h2v1.6h-2zM74 6h5v1.6h-5zM15 8h4v1.6h-4zM39 8h7v1.6h-7zM47 8h5v1.6h-5zM63 8h2v1.6h-2zM74 8h5v1.6h-5zM103 8h2v1.6h-2zM15 12h4v1.6h-4zM15 38h4v1.6h-4zM15 54h4v1.6h-4zM15 86h4v1.6h-4zM15 114h4v1.6h-4zM15 150h4v1.6h-4zM15 160h4v1.6h-4zM15 176h4v1.6h-4zM15 186h4v1.6h-4zM15 246h4v1.6h-4zM15 258h4v1.6h-4zM15 272h4v1.6h-4zM15 286h4v1.6h-4zM15 302h4v1.6h-4zM15 316h4v1.6h-4zM15 332h4v1.6h-4zM15 346h4v1.6h-4zM15 386h4v1.6h-4zM15 402h4v1.6h-4zM15 434h4v1.6h-4zM15 452h4v1.6h-4zM15 470h4v1.6h-4zM15 484h4v1.6h-4zM15 500h4v1.6h-4zM15 514h4v1.6h-4zM15 524h4v1.6h-4zM15 632h4v1.6h-4zM15 642h4v1.6h-4zM15 652h4v1.6h-4zM15 662h4v1.6h-4zM15 672h4v1.6h-4zM15 682h4v1.6h-4zM15 692h4v1.6h-4zM15 702h4v1.6h-4zM15 712h4v1.6h-4zM15 722h4v1.6h-4zM15 732h4v1.6h-4zM15 742h4v1.6h-4zM15 752h4v1.6h-4zM15 762h4v1.6h-4zM15 772h4v1.6h-4zM15 782h4v1.6h-4zM15 792h4v1.6h-4zM15 802h4v1.6h-4zM15 812h4v1.6h-4zM15 822h4v1.6h-4zM15 832h4v1.6h-4zM15 842h4v1.6h-4zM15 852h4v1.6h-4zM15 862h4v1.6h-4z"/><path fill="#4ec9b0" d="M20 4h5v1.6h-5zM26 4h1v1.6h-1zM31 4h1v1.6h-1zM35 4h4v1.6h-4zM20 6h5v1.6h-5zM26 6h1v1.6h-1zM44 6h6v1.6h-6zM53 6h7v1.6h-7zM69 6h1v1.6h-1zM80 6h1v1.6h-1zM84 6h1v1.6h-1zM86 6h1v1.6h-1zM20 8h13v1.6h-13zM34 8h1v1.6h-1zM37 8h1v1.6h-1zM53 8h1v1.6h-1zM61 8h1v1.6h-1zM66 8h7v1.6h-7zM80 8h1v1.6h-1zM83 8h1v1.6h-1zM89 8h1v1.6h-1zM91 8h1v1.6h-1zM101 8h1v1.6h-1zM106 8h1v1.6h-1zM112 8h11v1.6h-11zM124 8h1v1.6h-1zM126 8h1v1.6h-1zM20 12h7v1.6h-7zM14 14h6v1.6h-6zM18 16h6v1.6h-6zM19 18h7v1.6h-7zM15 20h6v1.6h-6zM17 22h6v1.6h-6zM20 32h3v1.6h-3zM20 38h18v1.6h-18zM20 54h20v1.6h-20zM14 58h7v1.6h-7zM24 62h7v1.6h-7zM25 66h5v1.6h-5zM31 66h7v1.6h-7zM18 70h23v1.6h-23zM20 72h45v1.6h-45zM27 76h7v1.6h-7zM20 80h5v1.6h-5zM26 80h7v1.6h-7zM20 86h18v1.6h-18zM14 90h7v1.6h-7zM16 94h7v1.6h-7zM20 96h30v1.6h-30zM22 100h7v1.6h-7zM21 104h7v1.6h-7zM23 108h7v1.6h-7zM20 114h12v1.6h-12zM18 116h16v1.6h-16zM28 118h30v1.6h-30zM21 122h5v1.6h-5zM27 122h7v1.6h-7zM30 126h32v1.6h-32zM21 130h5v1.6h-5zM27 130h7v1.6h-7zM24 134h5v1.6h-5zM30 134h7v1.6h-7zM16 138h5v1.6h-5zM22 138h7v1.6h-7zM23 142h5v1.6h-5zM29 142h7v1.6h-7zM29 144h5v1.6h-5zM35 144h7v1.6h-7zM20 150h16v1.6h-16zM20 160h8v1.6h-8zM15 162h5v1.6h-5zM21 162h7v1.6h-7zM15 164h5v1.6h-5zM21 164h7v1.6h-7zM15 166h5v1.6h-5zM21 166h7v1.6h-7zM15 168h5v1.6h-5zM21 168h7v1.6h-7zM15 170h5v1.6h-5zM21 170h7v1.6h-7zM20 176h17v1.6h-17zM20 186h8v1.6h-8zM19 190h5v1.6h-5zM25 190h7v1.6h-7zM26 194h5v1.6h-5zM32 194h7v1.6h-7zM19 198h5v1.6h-5zM25 198h7v1.6h-7zM21 202h5v1.6h-5zM27 202h7v1.6h-7zM23 204h12v1.6h-12zM34 206h45v1.6h-45zM35 208h35v1.6h-35zM19 210h18v1.6h-18zM23 214h5v1.6h-5zM29 214h7v1.6h-7zM22 218h5v1.6h-5zM28 218h7v1.6h-7zM22 222h5v1.6h-5zM28 222h7v1.6h-7zM22 226h5v1.6h-5zM28 226h7v1.6h-7zM22 230h5v1.6h-5zM28 230h7v1.6h-7zM24 234h5v1.6h-5zM30 234h7v1.6h-7zM24 238h5v1.6h-5zM30 238h7v1.6h-7zM23 240h28v1.6h-28zM20 246h15v1.6h-15zM17 248h10v1.6h-10zM17 250h15v1.6h-15zM20 252h12v1.6h-12zM20 258h17v1.6h-17zM23 262h24v1.6h-24zM22 264h7v1.6h-7zM20 272h34v1.6h-34zM19 274h17v1.6h-17zM18 276h14v1.6h-14zM18 278h5v1.6h-5zM24 278h7v1.6h-7zM19 280h5v1.6h-5zM25 280h7v1.6h-7zM20 286h25v1.6h-25zM24 290h25v1.6h-25zM18 292h7v1.6h-7zM22 294h7v1.6h-7zM20 302h35v1.6h-35zM19 304h17v1.6h-17zM18 306h14v1.6h-14zM18 308h5v1.6h-5zM24 308h7v1.6h-7zM19 310h5v1.6h-5zM25 310h7v1.6h-7zM20 316h16v1.6h-16zM14 318h20v1.6h-20zM22 320h22v1.6h-22zM16 322h22v1.6h-22zM15 324h23v1.6h-23zM16 326h22v1.6h-22zM20 332h19v1.6h-19zM17 334h13v1.6h-13zM16 336h20v1.6h-20zM19 338h20v1.6h-20zM20 346h10v1.6h-10zM14 352h7v1.6h-7zM25 356h7v1.6h-7zM26 360h5v1.6h-5zM32 360h7v1.6h-7zM18 364h22v1.6h-22zM20 368h37v1.6h-37zM20 372h7v1.6h-7zM20 376h5v1.6h-5zM26 376h7v1.6h-7zM20 386h20v1.6h-20zM19 388h24v1.6h-24zM18 390h20v1.6h-20zM18 392h5v1.6h-5zM24 392h7v1.6h-7zM19 394h5v1.6h-5zM25 394h7v1.6h-7zM20 402h8v1.6h-8zM14 408h7v1.6h-7zM19 412h16v1.6h-16zM16 416h16v1.6h-16zM26 420h16v1.6h-16zM21 424h24v1.6h-24zM20 434h14v1.6h-14zM19 436h14v1.6h-14zM18 438h12v1.6h-12zM18 440h5v1.6h-5zM24 440h7v1.6h-7zM19 442h5v1.6h-5zM25 442h7v1.6h-7zM20 452h23v1.6h-23zM19 454h20v1.6h-20zM18 456h16v1.6h-16zM18 458h5v1.6h-5zM24 458h7v1.6h-7zM19 460h5v1.6h-5zM25 460h7v1.6h-7zM20 470h20v1.6h-20zM19 472h16v1.6h-16zM18 474h14v1.6h-14zM18 476h5v1.6h-5zM24 476h7v1.6h-7zM19 478h5v1.6h-5zM25 478h7v1.6h-7zM20 484h34v1.6h-34zM30 488h43v1.6h-43zM15 490h7v1.6h-7zM22 492h7v1.6h-7zM20 500h52v1.6h-52zM19 502h30v1.6h-30zM18 504h28v1.6h-28zM18 506h5v1.6h-5zM24 506h7v1.6h-7zM19 508h5v1.6h-5zM25 508h7v1.6h-7zM20 514h34v1.6h-34zM14 516h7v1.6h-7zM19 518h7v1.6h-7zM20 524h7v1.6h-7zM23 528h21v1.6h-21zM26 530h24v1.6h-24zM26 532h24v1.6h-24zM24 534h22v1.6h-22zM27 536h25v1.6h-25zM27 538h25v1.6h-25zM20 540h20v1.6h-20zM23 542h23v1.6h-23zM23 544h23v1.6h-23zM27 546h27v1.6h-27zM30 548h30v1.6h-30zM30 550h30v1.6h-30zM27 552h25v1.6h-25zM30 554h28v1.6h-28zM30 556h28v1.6h-28zM28 558h28v1.6h-28zM31 560h31v1.6h-31zM31 562h31v1.6h-31zM34 564h33v1.6h-33zM37 566h36v1.6h-36zM37 568h36v1.6h-36zM30 570h30v1.6h-30zM26 572h24v1.6h-24zM29 574h27v1.6h-27zM29 576h27v1.6h-27zM26 578h24v1.6h-24zM29 580h27v1.6h-27zM29 582h27v1.6h-27zM20 584h18v1.6h-18zM23 586h21v1.6h-21zM23 588h21v1.6h-21zM36 590h36v1.6h-36zM39 592h39v1.6h-39zM39 594h39v1.6h-39zM33 596h33v1.6h-33zM36 598h36v1.6h-36zM36 600h36v1.6h-36zM25 602h26v1.6h-26zM28 604h29v1.6h-29zM28 606h29v1.6h-29zM24 608h24v1.6h-24zM27 610h27v1.6h-27zM27 612h27v1.6h-27zM25 614h26v1.6h-26zM28 616h29v1.6h-29zM28 618h29v1.6h-29zM20 620h23v1.6h-23zM23 622h26v1.6h-26zM23 624h26v1.6h-26zM20 632h21v1.6h-21zM17 634h20v1.6h-20zM20 642h24v1.6h-24zM17 644h17v1.6h-17zM20 652h24v1.6h-24zM18 654h13v1.6h-13zM20 662h22v1.6h-22zM18 664h22v1.6h-22zM20 672h25v1.6h-25zM18 674h18v1.6h-18zM20 682h25v1.6h-25zM17 684h14v1.6h-14zM20 692h19v1.6h-19zM18 694h19v1.6h-19zM20 702h22v1.6h-22zM17 704h15v1.6h-15zM20 712h22v1.6h-22zM18 714h11v1.6h-11zM20 722h26v1.6h-26zM18 724h26v1.6h-26zM20 732h29v1.6h-29zM18 734h22v1.6h-22zM20 742h29v1.6h-29zM18 744h18v1.6h-18zM20 752h25v1.6h-25zM18 754h25v1.6h-25zM20 762h28v1.6h-28zM17 764h21v1.6h-21zM20 772h28v1.6h-28zM17 774h17v1.6h-17zM20 782h27v1.6h-27zM17 784h27v1.6h-27zM20 792h30v1.6h-30zM17 794h23v1.6h-23zM20 802h30v1.6h-30zM17 804h19v1.6h-19zM20 812h33v1.6h-33zM17 814h33v1.6h-33zM20 822h36v1.6h-36zM17 824h29v1.6h-29zM20 832h36v1.6h-36zM17 834h25v1.6h-25zM20 842h29v1.6h-29zM18 844h29v1.6h-29zM20 852h24v1.6h-24zM17 854h24v1.6h-24zM20 862h27v1.6h-27zM17 864h20v1.6h-20z"/><path fill="#6a9955" d="M8 10h3v1.6h-3zM12 10h3v1.6h-3zM16 10h8v1.6h-8zM25 10h3v1.6h-3zM29 10h6v1.6h-6zM36 10h8v1.6h-8zM45 10h6v1.6h-6zM52 10h2v1.6h-2zM55 10h5v1.6h-5zM61 10h6v1.6h-6zM68 10h6v1.6h-6zM75 10h2v1.6h-2zM10 24h3v1.6h-3zM11 26h1v1.6h-1zM13 26h3v1.6h-3zM17 26h8v1.6h-8zM26 26h6v1.6h-6zM33 26h4v1.6h-4zM38 26h10v1.6h-10zM49 26h4v1.6h-4zM54 26h3v1.6h-3zM58 26h4v1.6h-4zM63 26h2v1.6h-2zM66 26h1v1.6h-1zM68 26h6v1.6h-6zM75 26h2v1.6h-2zM78 26h7v1.6h-7zM86 26h7v1.6h-7zM11 28h1v1.6h-1zM13 28h3v1.6h-3zM17 28h8v1.6h-8zM26 28h25v1.6h-25zM52 28h10v1.6h-10zM63 28h2v1.6h-2zM66 28h7v1.6h-7zM74 28h3v1.6h-3zM78 28h5v1.6h-5zM84 28h7v1.6h-7zM92 28h5v1.6h-5zM98 28h3v1.6h-3zM102 28h4v1.6h-4zM107 28h4v1.6h-4zM112 28h2v1.6h-2zM115 28h5v1.6h-5zM121 28h5v1.6h-5zM127 28h4v1.6h-4zM132 28h2v1.6h-2zM135 28h4v1.6h-4zM11 30h2v1.6h-2zM10 56h3v1.6h-3zM14 56h7v1.6h-7zM22 56h3v1.6h-3zM26 56h4v1.6h-4zM31 56h3v1.6h-3zM35 56h8v1.6h-8zM44 56h5v1.6h-5zM50 56h5v1.6h-5zM56 56h8v1.6h-8zM65 56h2v1.6h-2zM68 56h3v1.6h-3zM72 56h2v1.6h-2zM10 60h3v1.6h-3zM14 60h4v1.6h-4zM19 60h2v1.6h-2zM22 60h3v1.6h-3zM26 60h6v1.6h-6zM33 60h2v1.6h-2zM10 64h3v1.6h-3zM14 64h3v1.6h-3zM18 64h11v1.6h-11zM30 64h2v1.6h-2zM33 64h4v1.6h-4zM38 64h4v1.6h-4zM43 64h2v1.6h-2zM10 68h3v1.6h-3zM14 68h13v1.6h-13zM28 68h6v1.6h-6zM35 68h3v1.6h-3zM39 68h4v1.6h-4zM44 68h8v1.6h-8zM53 68h2v1.6h-2zM10 74h3v1.6h-3zM14 74h4v1.6h-4zM19 74h8v1.6h-8zM28 74h2v1.6h-2zM31 74h2v1.6h-2zM10 78h3v1.6h-3zM14 78h4v1.6h-4zM19 78h11v1.6h-11zM31 78h7v1.6h-7zM39 78h4v1.6h-4zM44 78h4v1.6h-4zM49 78h11v1.6h-11zM61 78h7v1.6h-7zM69 78h4v1.6h-4zM74 78h4v1.6h-4zM79 78h5v1.6h-5zM85 78h2v1.6h-2zM10 88h3v1.6h-3zM14 88h7v1.6h-7zM22 88h2v1.6h-2zM25 88h2v1.6h-2zM28 88h7v1.6h-7zM36 88h2v1.6h-2zM10 92h3v1.6h-3zM14 92h3v1.6h-3zM18 92h4v1.6h-4zM23 92h2v1.6h-2zM26 92h3v1.6h-3zM30 92h7v1.6h-7zM38 92h2v1.6h-2zM10 98h3v1.6h-3zM14 98h7v1.6h-7zM22 98h3v1.6h-3zM26 98h4v1.6h-4zM31 98h3v1.6h-3zM35 98h8v1.6h-8zM44 98h5v1.6h-5zM50 98h5v1.6h-5zM56 98h8v1.6h-8zM65 98h2v1.6h-2zM68 98h3v1.6h-3zM72 98h2v1.6h-2zM10 102h3v1.6h-3zM14 102h4v1.6h-4zM19 102h11v1.6h-11zM31 102h7v1.6h-7zM39 102h4v1.6h-4zM44 102h4v1.6h-4zM49 102h11v1.6h-11zM61 102h3v1.6h-3zM65 102h2v1.6h-2zM10 106h3v1.6h-3zM14 106h13v1.6h-13zM28 106h6v1.6h-6zM35 106h3v1.6h-3zM39 106h4v1.6h-4zM44 106h8v1.6h-8zM53 106h2v1.6h-2zM10 120h3v1.6h-3zM14 120h4v1.6h-4zM19 120h11v1.6h-11zM31 120h7v1.6h-7zM39 120h4v1.6h-4zM44 120h4v1.6h-4zM49 120h11v1.6h-11zM61 120h7v1.6h-7zM69 120h4v1.6h-4zM74 120h4v1.6h-4zM79 120h11v1.6h-11zM91 120h3v1.6h-3zM95 120h2v1.6h-2zM10 124h3v1.6h-3zM14 124h4v1.6h-4zM19 124h11v1.6h-11zM31 124h3v1.6h-3zM35 124h2v1.6h-2zM10 128h3v1.6h-3zM14 128h4v1.6h-4zM19 128h11v1.6h-11zM31 128h7v1.6h-7zM39 128h4v1.6h-4zM44 128h4v1.6h-4zM49 128h5v1.6h-5zM55 128h2v1.6h-2zM10 132h3v1.6h-3zM14 132h3v1.6h-3zM18 132h11v1.6h-11zM30 132h2v1.6h-2zM33 132h4v1.6h-4zM38 132h4v1.6h-4zM43 132h2v1.6h-2zM10 136h3v1.6h-3zM14 136h4v1.6h-4zM19 136h11v1.6h-11zM31 136h1v1.6h-1zM33 136h2v1.6h-2zM10 140h3v1.6h-3zM14 140h4v1.6h-4zM19 140h11v1.6h-11zM31 140h1v1.6h-1zM33 140h2v1.6h-2zM10 188h3v1.6h-3zM14 188h4v1.6h-4zM19 188h2v1.6h-2zM22 188h3v1.6h-3zM26 188h6v1.6h-6zM33 188h2v1.6h-2zM10 192h3v1.6h-3zM14 192h4v1.6h-4zM19 192h4v1.6h-4zM24 192h4v1.6h-4zM29 192h3v1.6h-3zM33 192h6v1.6h-6zM40 192h5v1.6h-5zM46 192h10v1.6h-10zM57 192h2v1.6h-2zM60 192h5v1.6h-5zM66 192h2v1.6h-2zM10 196h3v1.6h-3zM14 196h4v1.6h-4zM19 196h4v1.6h-4zM24 196h4v1.6h-4zM29 196h3v1.6h-3zM33 196h6v1.6h-6zM40 196h5v1.6h-5zM46 196h10v1.6h-10zM57 196h2v1.6h-2zM60 196h5v1.6h-5zM66 196h2v1.6h-2zM10 200h3v1.6h-3zM14 200h4v1.6h-4zM19 200h11v1.6h-11zM31 200h7v1.6h-7zM39 200h4v1.6h-4zM44 200h4v1.6h-4zM49 200h11v1.6h-11zM61 200h3v1.6h-3zM65 200h2v1.6h-2zM10 212h3v1.6h-3zM14 212h4v1.6h-4zM19 212h2v1.6h-2zM22 212h3v1.6h-3zM26 212h6v1.6h-6zM33 212h2v1.6h-2zM10 216h3v1.6h-3zM14 216h3v1.6h-3zM18 216h4v1.6h-4zM23 216h2v1.6h-2zM26 216h3v1.6h-3zM30 216h7v1.6h-7zM38 216h2v1.6h-2zM10 220h3v1.6h-3zM14 220h4v1.6h-4zM19 220h8v1.6h-8zM28 220h2v1.6h-2zM31 220h2v1.6h-2zM10 224h3v1.6h-3zM14 224h3v1.6h-3zM18 224h4v1.6h-4zM23 224h2v1.6h-2zM26 224h3v1.6h-3zM30 224h7v1.6h-7zM38 224h2v1.6h-2zM10 228h3v1.6h-3zM14 228h4v1.6h-4zM19 228h8v1.6h-8zM28 228h2v1.6h-2zM31 228h2v1.6h-2zM10 232h3v1.6h-3zM14 232h7v1.6h-7zM22 232h4v1.6h-4zM27 232h5v1.6h-5zM33 232h2v1.6h-2zM36 232h5v1.6h-5zM42 232h2v1.6h-2zM10 236h3v1.6h-3zM14 236h4v1.6h-4zM19 236h11v1.6h-11zM31 236h7v1.6h-7zM39 236h4v1.6h-4zM44 236h4v1.6h-4zM49 236h11v1.6h-11zM61 236h3v1.6h-3zM65 236h2v1.6h-2zM8 344h3v1.6h-3zM12 344h4v1.6h-4zM17 344h9v1.6h-9zM27 344h6v1.6h-6zM34 344h2v1.6h-2zM10 350h3v1.6h-3zM14 350h7v1.6h-7zM22 350h3v1.6h-3zM26 350h4v1.6h-4zM31 350h3v1.6h-3zM35 350h8v1.6h-8zM44 350h5v1.6h-5zM50 350h5v1.6h-5zM56 350h8v1.6h-8zM65 350h2v1.6h-2zM68 350h3v1.6h-3zM72 350h2v1.6h-2zM10 354h3v1.6h-3zM14 354h3v1.6h-3zM18 354h4v1.6h-4zM23 354h2v1.6h-2zM26 354h3v1.6h-3zM30 354h7v1.6h-7zM38 354h2v1.6h-2zM10 358h3v1.6h-3zM14 358h5v1.6h-5zM20 358h7v1.6h-7zM28 358h2v1.6h-2zM31 358h3v1.6h-3zM35 358h4v1.6h-4zM40 358h2v1.6h-2zM10 362h3v1.6h-3zM14 362h4v1.6h-4zM19 362h2v1.6h-2zM22 362h3v1.6h-3zM26 362h8v1.6h-8zM35 362h2v1.6h-2zM10 366h3v1.6h-3zM14 366h4v1.6h-4zM19 366h8v1.6h-8zM28 366h2v1.6h-2zM31 366h2v1.6h-2zM10 370h3v1.6h-3zM14 370h4v1.6h-4zM19 370h11v1.6h-11zM31 370h7v1.6h-7zM39 370h4v1.6h-4zM44 370h4v1.6h-4zM49 370h11v1.6h-11zM61 370h7v1.6h-7zM69 370h4v1.6h-4zM75 370h2v1.6h-2zM10 374h3v1.6h-3zM14 374h4v1.6h-4zM19 374h11v1.6h-11zM31 374h7v1.6h-7zM39 374h4v1.6h-4zM44 374h4v1.6h-4zM49 374h11v1.6h-11zM61 374h7v1.6h-7zM69 374h4v1.6h-4zM75 374h2v1.6h-2zM8 384h3v1.6h-3zM12 384h4v1.6h-4zM17 384h9v1.6h-9zM27 384h6v1.6h-6zM34 384h2v1.6h-2zM8 400h3v1.6h-3zM12 400h3v1.6h-3zM16 400h6v1.6h-6zM23 400h3v1.6h-3zM27 400h3v1.6h-3zM31 400h3v1.6h-3zM35 400h4v1.6h-4zM40 400h3v1.6h-3zM44 400h5v1.6h-5zM50 400h2v1.6h-2zM10 406h3v1.6h-3zM14 406h4v1.6h-4zM19 406h8v1.6h-8zM28 406h2v1.6h-2zM31 406h2v1.6h-2zM10 410h3v1.6h-3zM14 410h4v1.6h-4zM19 410h2v1.6h-2zM22 410h3v1.6h-3zM26 410h8v1.6h-8zM35 410h2v1.6h-2zM10 414h3v1.6h-3zM14 414h4v1.6h-4zM19 414h11v1.6h-11zM31 414h7v1.6h-7zM39 414h4v1.6h-4zM44 414h4v1.6h-4zM49 414h11v1.6h-11zM61 414h7v1.6h-7zM69 414h4v1.6h-4zM75 414h2v1.6h-2zM10 418h3v1.6h-3zM14 418h4v1.6h-4zM19 418h11v1.6h-11zM31 418h7v1.6h-7zM39 418h4v1.6h-4zM44 418h4v1.6h-4zM49 418h11v1.6h-11zM61 418h7v1.6h-7zM69 418h4v1.6h-4zM75 418h2v1.6h-2zM10 422h3v1.6h-3zM14 422h13v1.6h-13zM28 422h6v1.6h-6zM35 422h3v1.6h-3zM39 422h4v1.6h-4zM44 422h8v1.6h-8zM53 422h2v1.6h-2zM8 432h3v1.6h-3zM12 432h3v1.6h-3zM16 432h6v1.6h-6zM23 432h3v1.6h-3zM27 432h3v1.6h-3zM31 432h3v1.6h-3zM35 432h4v1.6h-4zM40 432h3v1.6h-3zM44 432h5v1.6h-5zM50 432h2v1.6h-2zM8 450h3v1.6h-3zM12 450h3v1.6h-3zM16 450h6v1.6h-6zM23 450h3v1.6h-3zM27 450h3v1.6h-3zM31 450h3v1.6h-3zM35 450h4v1.6h-4zM40 450h3v1.6h-3zM44 450h5v1.6h-5zM50 450h2v1.6h-2zM8 468h3v1.6h-3zM12 468h3v1.6h-3zM16 468h6v1.6h-6zM23 468h3v1.6h-3zM27 468h3v1.6h-3zM31 468h3v1.6h-3zM35 468h4v1.6h-4zM40 468h3v1.6h-3zM44 468h5v1.6h-5zM50 468h2v1.6h-2z"/><path fill="#4fc1ff" d="M10 40h2v1.6h-2zM10 42h13v1.6h-13zM10 44h20v1.6h-20zM10 46h11v1.6h-11zM10 48h8v1.6h-8zM10 152h6v1.6h-6zM10 154h8v1.6h-8zM10 178h2v1.6h-2zM10 180h12v1.6h-12z"/></svg></div>
<div id="status"></div>
</body></html>
